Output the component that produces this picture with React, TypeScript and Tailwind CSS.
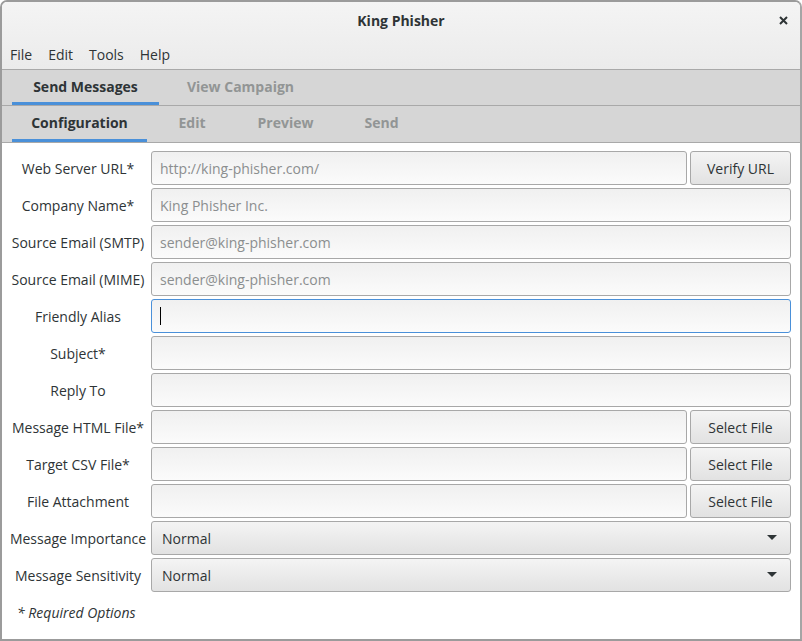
import { useState } from 'react'

const font = { fontFamily: '"Open Sans", "Noto Sans", sans-serif' }

type Row = {
  label: string
  placeholder?: string
  button?: string
  select?: string
  focused?: boolean
}

const rows: Row[] = [
  { label: 'Web Server URL*', placeholder: 'http://king-phisher.com/', button: 'Verify URL' },
  { label: 'Company Name*', placeholder: 'King Phisher Inc.' },
  { label: 'Source Email (SMTP)', placeholder: 'sender@king-phisher.com' },
  { label: 'Source Email (MIME)', placeholder: 'sender@king-phisher.com' },
  { label: 'Friendly Alias', focused: true },
  { label: 'Subject*' },
  { label: 'Reply To' },
  { label: 'Message HTML File*', button: 'Select File' },
  { label: 'Target CSV File*', button: 'Select File' },
  { label: 'File Attachment', button: 'Select File' },
  { label: 'Message Importance', select: 'Normal' },
  { label: 'Message Sensitivity', select: 'Normal' },
]

function TabBar({ tabs, active, widths, tall }: { tabs: string[]; active: number; widths: number[]; tall?: boolean }) {
  return (
    <div
      className={
        'flex border-b border-[#a9a9a9] bg-[#d6d6d6] pl-[10px] gap-[10px] ' + (tall ? 'h-[37px]' : 'h-[36px]')
      }
    >
      {tabs.map((t, i) => (
        <div
          key={t}
          style={{ width: widths[i] }}
          className={
            'flex items-center justify-center text-[14px] font-bold border-b-[3px] ' +
            (i === active ? 'border-[#4a90d9] text-[#2e3436]' : 'border-transparent text-[#929595]')
          }
        >
          {t}
        </div>
      ))}
    </div>
  )
}

function Field({ row }: { row: Row }) {
  const [value, setValue] = useState('')
  if (row.select) {
    return (
      <div className="flex h-[34px] items-center justify-between rounded-[3px] border border-[#a8a8a8] bg-gradient-to-b from-[#f4f4f4] to-[#e2e2e2] pl-[10px] pr-[13px] text-[14px] text-[#2e3436]">
        <span>{row.select}</span>
        <svg width="10" height="6" viewBox="0 0 10 6">
          <path d="M0 0 L10 0 L5 5 Z" fill="#2e3436" />
        </svg>
      </div>
    )
  }
  return (
    <div className="flex gap-[3px]">
      <div className="relative flex min-w-0 flex-1">
        <input
          value={value}
          onChange={(e) => setValue(e.target.value)}
          placeholder={row.placeholder}
          className={
            'h-[34px] min-w-0 flex-1 rounded-[3px] border bg-gradient-to-b from-[#f0f0f0] to-[#fbfbfb] px-[8px] text-[14px] text-[#2e3436] placeholder:text-[#8b8e8f] outline-none ' +
            (row.focused ? 'border-[#4a90d9]' : 'border-[#a8a8a8]')
          }
        />
        {/* caret of the focused entry */}
        {row.focused && value === '' && (
          <span className="pointer-events-none absolute left-[9px] top-[8px] h-[18px] w-px bg-black" />
        )}
      </div>
      {row.button && (
        <button className="h-[34px] w-[101px] rounded-[3px] border border-[#a8a8a8] bg-gradient-to-b from-[#f4f4f4] to-[#e2e2e2] text-[14px] text-[#2e3436]">
          {row.button}
        </button>
      )}
    </div>
  )
}

export default function App() {
  return (
    <div style={font} className="h-[641px] w-[802px] bg-white">
      <div className="flex h-full flex-col overflow-hidden rounded-t-[7px] border-2 border-[#9b9b9b] border-r-[#a5a5a5]">
        {/* Title bar + menu */}
        <div className="bg-gradient-to-b from-[#f4f4f4] to-[#ebebeb]">
          <div className="relative flex h-[37px] items-center justify-center text-[14px] font-bold text-[#2e3436]">
            King Phisher
            <svg className="absolute right-[12px] top-[14px]" width="9" height="9" viewBox="0 0 9 9">
              <path d="M1 1 L8 8 M8 1 L1 8" stroke="#2e3436" strokeWidth="2" />
            </svg>
          </div>
          <div className="flex h-[30px] items-center pt-px text-[14px] text-[#2e3436]">
            {['File', 'Edit', 'Tools', 'Help'].map((m) => (
              <span key={m} className="px-[8px]">
                {m}
              </span>
            ))}
          </div>
        </div>
        <div className="border-t border-[#a9a9a9]" />
        <TabBar tabs={['Send Messages', 'View Campaign']} active={0} widths={[147, 143]} />
        <TabBar tabs={['Configuration', 'Edit', 'Preview', 'Send']} active={0} widths={[135, 70, 97, 75]} tall />

        {/* Form */}
        <div className="flex-1 bg-white pl-[6px] pr-[9px] pt-[8px]">
          <div className="grid grid-cols-[140px_1fr] gap-x-[3px] gap-y-[3px]">
            {rows.map((r) => (
              <div key={r.label} className="contents">
                <div className="flex h-[34px] items-center justify-center whitespace-nowrap text-[14px] text-[#2e3436]">
                  {r.label}
                </div>
                <Field row={r} />
              </div>
            ))}
          </div>
          <div className="mt-[10px] pl-[9px] text-[14px] italic text-[#2e3436]">* Required Options</div>
        </div>
      </div>
    </div>
  )
}
